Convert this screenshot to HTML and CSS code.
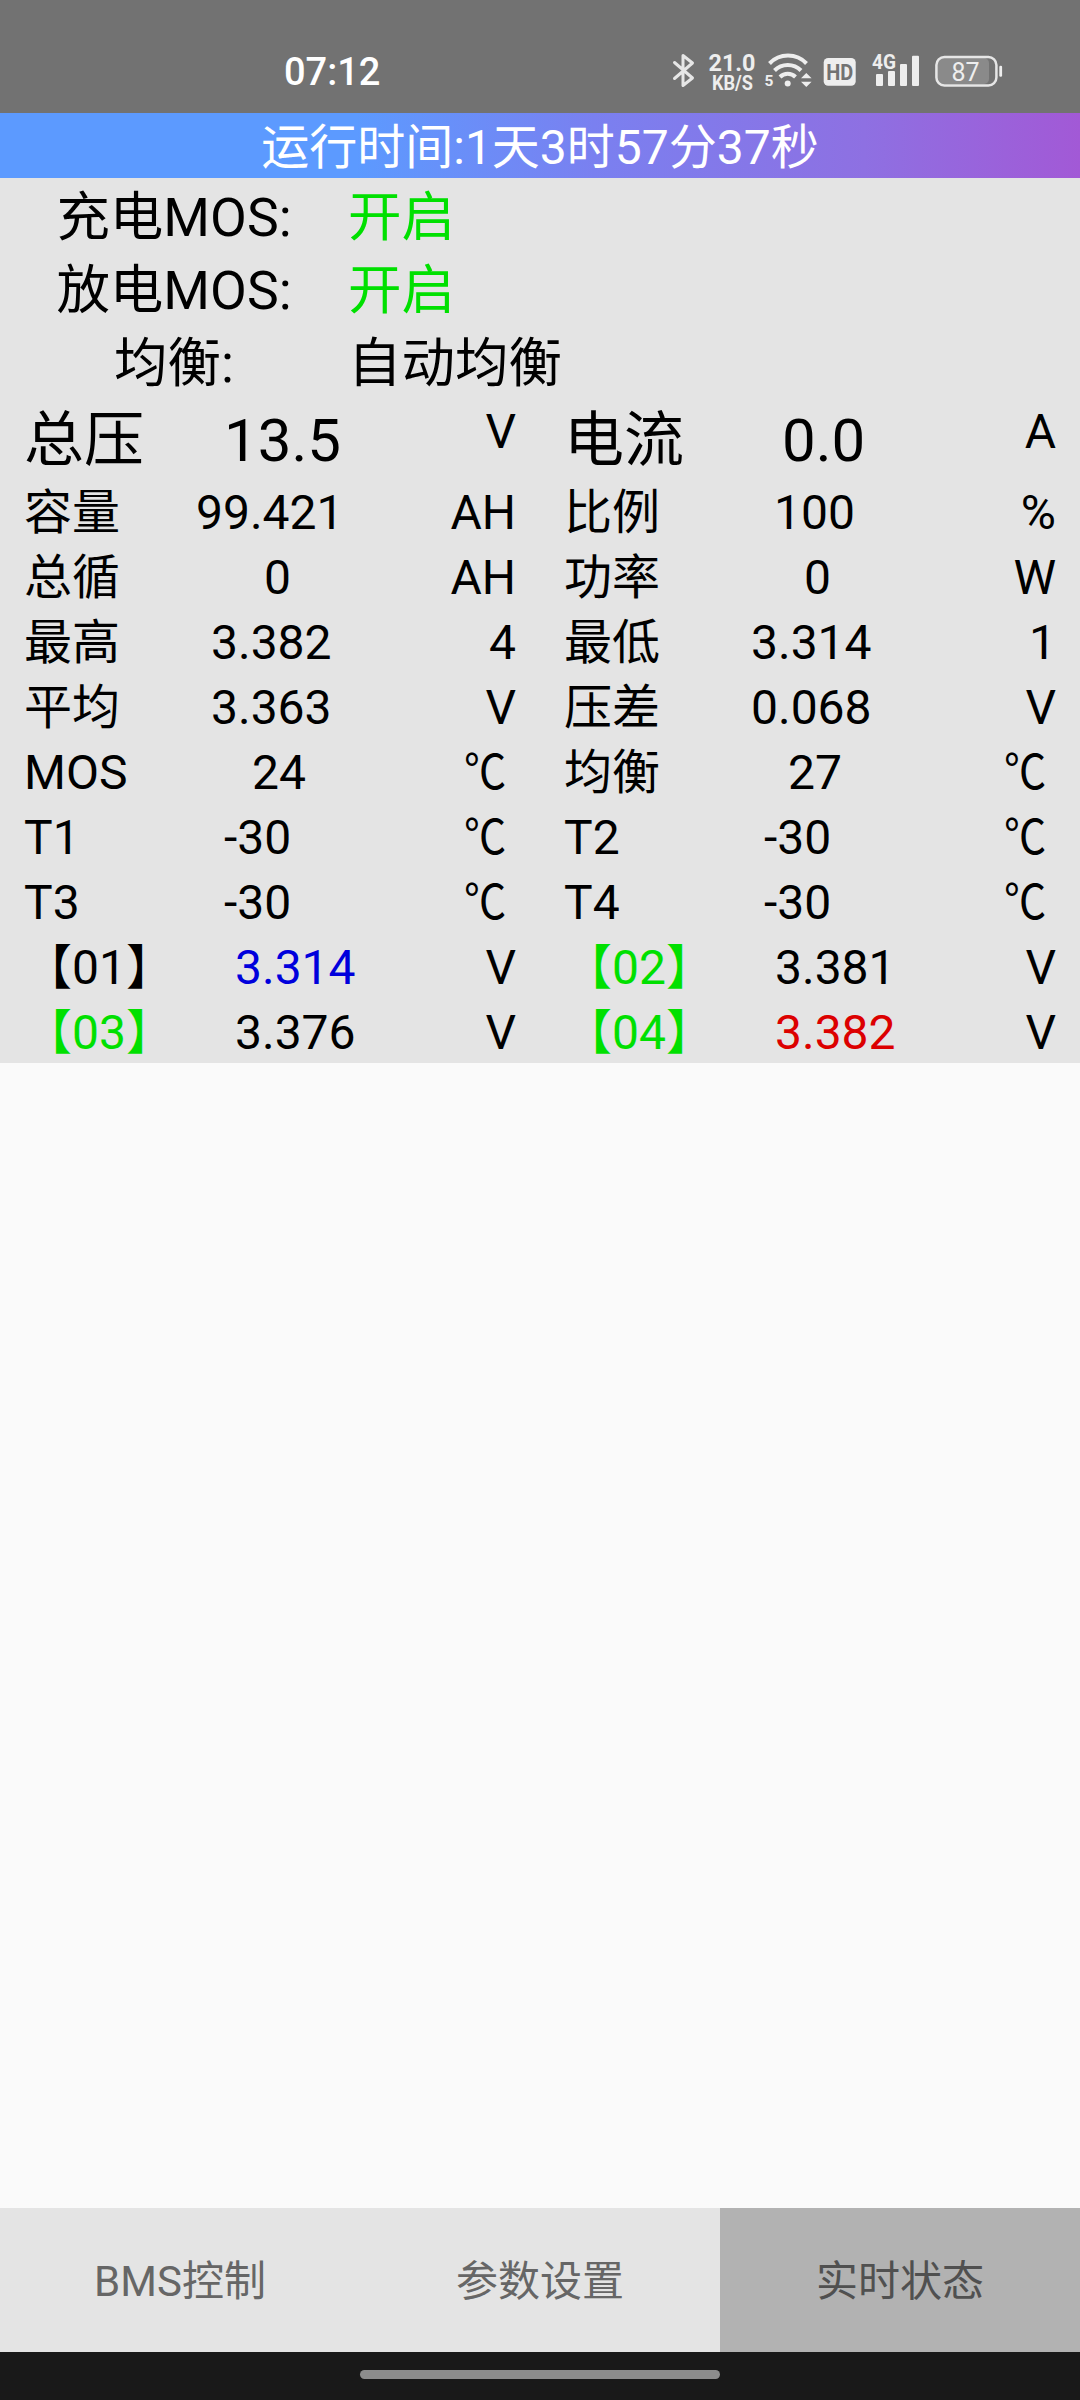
FILE: index.html
```html
<!DOCTYPE html>
<html lang="zh-CN">
<head>
    <meta charset="UTF-8">
    <meta name="viewport" content="width=device-width, initial-scale=1.0">
    <title>BMS 实时状态</title>
    <link rel="stylesheet" href="styles.css">
</head>
<body>

    <header class="status-bar">
        <span class="clock">07:12</span>
        <div class="status-icons">
            <svg class="icon-bluetooth" width="24" height="40" viewBox="0 0 24 40">
                <path d="M2.5 12.5 L20.5 28 L11 35.5 V5.5 L20.5 13 L2.5 28.5" fill="none" stroke="#e6e6e6" stroke-width="3" stroke-linejoin="round" stroke-linecap="round"/>
            </svg>
            <svg class="icon-speed" width="56" height="44" viewBox="0 0 56 44">
                <text x="28" y="20.7" font-size="23.5" font-weight="700" text-anchor="middle" textLength="47" lengthAdjust="spacingAndGlyphs">21.0</text>
                <text x="28.5" y="40" font-size="19.5" font-weight="700" text-anchor="middle" textLength="41" lengthAdjust="spacingAndGlyphs">KB/S</text>
            </svg>
            <svg class="icon-wifi" width="50" height="40" viewBox="0 0 50 40">
                <g fill="none" stroke="#eee" stroke-width="4">
                    <path d="M6.5 13.5 A25.5 25.5 0 0 1 43.5 13.5"/>
                    <path d="M11.5 20.5 A18.5 18.5 0 0 1 38 20.5"/>
                    <path d="M17 27 A11 11 0 0 1 32.5 27"/>
                </g>
                <circle cx="24.7" cy="33.5" r="3"/>
                <path d="M38 28.3 L43.3 23 L48.6 28.3 Z M38 31.7 H48.6 L43.3 37 Z"/>
                <text x="1.5" y="36.3" font-size="15.5" font-weight="700">5</text>
            </svg>
            <svg class="icon-hd" width="33" height="40" viewBox="0 0 33 40">
                <rect x="0.7" y="8" width="32" height="27.7" rx="4.5"/>
                <text class="hd-text" x="16.7" y="30" font-size="22.5" font-weight="700" text-anchor="middle" textLength="27" lengthAdjust="spacingAndGlyphs">HD</text>
            </svg>
            <svg class="icon-signal" width="48" height="40" viewBox="0 0 48 40">
                <rect x="4" y="24" width="7" height="12" rx="1"/>
                <rect x="16" y="21" width="7" height="15" rx="1"/>
                <rect x="28" y="14" width="7" height="22" rx="1"/>
                <rect x="40" y="5.7" width="7" height="30.3" rx="1"/>
                <text x="0" y="19.3" font-size="21" font-weight="700" textLength="24" lengthAdjust="spacingAndGlyphs">4G</text>
            </svg>
            <svg class="icon-battery" width="69" height="40" viewBox="0 0 69 40">
                <rect x="3" y="8" width="52" height="26" rx="5" fill="#8a8a8a"/>
                <rect x="2.4" y="7" width="60" height="28.4" rx="8" fill="none" stroke="#e6e6e6" stroke-width="2.5"/>
                <rect x="65.3" y="15.7" width="2.8" height="11" rx="1.2"/>
                <text x="31.5" y="30.5" font-size="25" text-anchor="middle">87</text>
            </svg>
        </div>
    </header>

    <div class="runtime">运行时间:1天3时57分37秒</div>

    <main class="panel">
        <div class="switch-row">
            <span class="switch-label">充电MOS:</span>
            <span class="green">开启</span>
        </div>
        <div class="switch-row">
            <span class="switch-label">放电MOS:</span>
            <span class="green">开启</span>
        </div>
        <div class="switch-row">
            <span class="switch-label">均衡:</span>
            <span>自动均衡</span>
        </div>

        <div class="grid">
            <div class="item total"><span class="label">总压</span><span class="value voltage">13.5</span><span class="unit">V</span></div>
            <div class="item total"><span class="label">电流</span><span class="value current">0.0</span><span class="unit">A</span></div>

            <div class="item"><span class="label">容量</span><span class="value capacity">99.421</span><span class="unit">AH</span></div>
            <div class="item"><span class="label">比例</span><span class="value percent">100</span><span class="unit">%</span></div>

            <div class="item"><span class="label">总循</span><span class="value digit">0</span><span class="unit">AH</span></div>
            <div class="item"><span class="label">功率</span><span class="value digit">0</span><span class="unit">W</span></div>

            <div class="item"><span class="label">最高</span><span class="value">3.382</span><span class="unit">4</span></div>
            <div class="item"><span class="label">最低</span><span class="value">3.314</span><span class="unit">1</span></div>

            <div class="item"><span class="label">平均</span><span class="value">3.363</span><span class="unit">V</span></div>
            <div class="item"><span class="label">压差</span><span class="value">0.068</span><span class="unit">V</span></div>

            <div class="item"><span class="label">MOS</span><span class="value mos-temp">24</span><span class="unit celsius">℃</span></div>
            <div class="item"><span class="label">均衡</span><span class="value bal-temp">27</span><span class="unit celsius">℃</span></div>

            <div class="item"><span class="label">T1</span><span class="value temp">-30</span><span class="unit celsius">℃</span></div>
            <div class="item"><span class="label">T2</span><span class="value temp">-30</span><span class="unit celsius">℃</span></div>

            <div class="item"><span class="label">T3</span><span class="value temp">-30</span><span class="unit celsius">℃</span></div>
            <div class="item"><span class="label">T4</span><span class="value temp">-30</span><span class="unit celsius">℃</span></div>

            <!-- single cells: blue is the lowest, red is the highest -->
            <div class="item"><span class="label">【01】</span><span class="value cell blue">3.314</span><span class="unit">V</span></div>
            <div class="item"><span class="label green">【02】</span><span class="value cell">3.381</span><span class="unit">V</span></div>

            <div class="item"><span class="label green">【03】</span><span class="value cell">3.376</span><span class="unit">V</span></div>
            <div class="item"><span class="label green">【04】</span><span class="value cell red">3.382</span><span class="unit">V</span></div>
        </div>
    </main>

    <nav class="tabs">
        <div class="tab">BMS控制</div>
        <div class="tab">参数设置</div>
        <div class="tab active">实时状态</div>
    </nav>

    <div class="gesture-bar">
        <div class="gesture-pill"></div>
    </div>

</body>
</html>
```
FILE: styles.css
```css
/* General reset */
* {
    margin: 0;
    padding: 0;
    box-sizing: border-box;
}

body {
    font-family: Roboto, 'Noto Sans CJK SC', sans-serif;
    background-color: #fafafa;
    color: #000;
    width: 1080px;
    height: 2400px;
    display: flex;
    flex-direction: column;
    font-size: 48px;
    overflow: hidden;
}

/* Phone status bar */
.status-bar {
    background-color: #727272;
    height: 113px;
    padding: 50px 77px 0 284px;
    display: flex;
    justify-content: space-between;
    align-items: flex-start;
}

.clock {
    color: #fff;
    font-size: 38px;
    font-weight: 500;
    line-height: 44px;
}

.status-icons {
    display: flex;
    fill: #eee;
}

.status-icons svg {
    display: block;
}

.icon-speed {
    margin-left: 8px;
}

.icon-wifi {
    margin-left: 3px;
}

.icon-hd {
    margin-left: 10px;
}

.hd-text {
    fill: #727272;
}

.icon-signal {
    margin-left: 16px;
}

.icon-battery {
    margin-left: 14px;
}

/* Running time */
.runtime {
    height: 65px;
    line-height: 69px;
    text-align: center;
    color: #fff;
    background: linear-gradient(90deg, #5c9aff 0%, #5c9aff 33%, #7a80f0 55%, #8e70e2 80%, #a259d6 100%);
}

/* Data panel */
.panel {
    background-color: #e4e4e4;
}

.switch-row {
    display: flex;
    height: 73px;
    line-height: 80px;
    font-size: 53.5px;
}

.switch-label {
    width: 348px;
    text-align: center;
}

.grid {
    display: grid;
    grid-template-columns: 1fr 1fr;
}

.item {
    display: flex;
    height: 65px;
    line-height: 69px;
    padding: 0 24px;
    white-space: nowrap;
}

.label {
    width: 172px;
}

.value {
    flex: 1;
    padding-left: 15px;
}

.celsius {
    padding-right: 11px;
    transform: scaleX(0.88);
    transform-origin: right;
}

.total {
    height: 81px;
}

.total .label,
.total .value {
    font-size: 60px;
    line-height: 87px;
}

.voltage {
    padding-left: 28px;
}

.current {
    padding-left: 46px;
}

.capacity {
    padding-left: 0;
}

.percent {
    padding-left: 38px;
}

.digit {
    padding-left: 68px;
}

.mos-temp {
    padding-left: 56px;
}

.bal-temp {
    padding-left: 52px;
}

.temp {
    padding-left: 28px;
}

.cell {
    padding-left: 39px;
}

.green {
    color: #00e000;
}

.blue {
    color: #0000dc;
}

.red {
    color: #dc0000;
}

/* Bottom tabs */
.tabs {
    display: flex;
    height: 144px;
    margin-top: auto;
    background-color: #e4e4e4;
}

.tab {
    flex: 1;
    line-height: 148px;
    text-align: center;
    font-size: 42px;
    color: #666;
}

.tab.active {
    background-color: #b2b2b2;
    color: #505050;
}

.gesture-bar {
    height: 48px;
    padding-top: 18px;
    background-color: #191919;
}

.gesture-pill {
    width: 360px;
    height: 9px;
    margin: 0 auto;
    border-radius: 5px;
    background-color: #8c8c8c;
}
```
